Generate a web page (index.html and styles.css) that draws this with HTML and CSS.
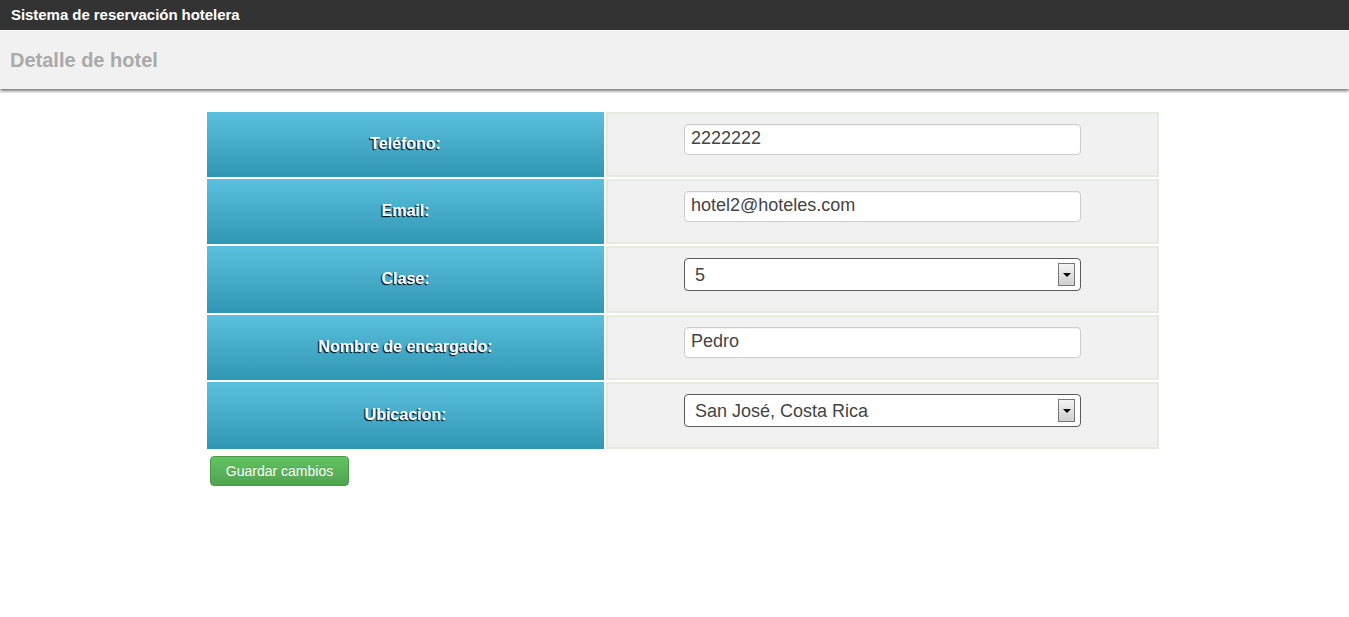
FILE: index.html
```html
<!DOCTYPE html>
<html lang="es">
<head>
<meta charset="utf-8">
<title>Detalle de hotel</title>
<link rel="stylesheet" href="styles.css">
</head>
<body>
<div class="topbar">Sistema de reservación hotelera</div>
<div class="pagehead"><h1 class="pagetitle">Detalle de hotel</h1></div>
<form class="content">
  <table class="detail">
    <tr>
      <td class="label">Teléfono:</td>
      <td class="field"><input class="text-input" type="text" value="2222222"></td>
    </tr>
    <tr>
      <td class="label">Email:</td>
      <td class="field"><input class="text-input" type="text" value="hotel2@hoteles.com"></td>
    </tr>
    <tr>
      <td class="label">Clase:</td>
      <td class="field">
        <div class="select-wrap">
          <select class="select-input"><option>5</option></select>
          <span class="select-arrow"></span>
        </div>
      </td>
    </tr>
    <tr>
      <td class="label">Nombre de encargado:</td>
      <td class="field"><input class="text-input" type="text" value="Pedro"></td>
    </tr>
    <tr>
      <td class="label">Ubicacion:</td>
      <td class="field">
        <div class="select-wrap">
          <select class="select-input"><option>San José, Costa Rica</option></select>
          <span class="select-arrow"></span>
        </div>
      </td>
    </tr>
  </table>
  <button class="btn-save" type="button">Guardar cambios</button>
</form>
</body>
</html>
```
FILE: styles.css
```css
html, body {
  margin: 0;
  padding: 0;
  background: #fff;
  font-family: "Liberation Sans", Arial, sans-serif;
}

.topbar {
  height: 30px;
  line-height: 30px;
  background: #333;
  color: #fff;
  font-weight: bold;
  font-size: 15px;
  letter-spacing: -0.05px;
  padding-left: 11px;
  border-bottom: 1px solid #fff;
}

.pagehead {
  height: 58px;
  background: #f1f1f1;
  box-shadow: 0 2px 3px rgba(0, 0, 0, 0.55);
  position: relative;
}

.pagetitle {
  margin: 0;
  padding-left: 10px;
  font-size: 20px;
  line-height: 58px;
  font-weight: bold;
  color: #aaa;
}

.content {
  padding: 21px 0 0 205px;
}

.detail {
  border-collapse: separate;
  border-spacing: 2px;
  width: 956px;
}

.label {
  width: 397px;
  padding: 0 0 2px;
  background: linear-gradient(to bottom, #5bc0de, #2f96b4);
  color: #fff;
  font-weight: bold;
  font-size: 16px;
  text-align: center;
  vertical-align: middle;
  text-shadow: -1px 1px 1px #000;
}

.field {
  background: #f1f1f1;
  border: 2px solid #e5ecde;
  padding: 10px 0;
  vertical-align: top;
}

.text-input {
  display: block;
  box-sizing: border-box;
  width: 397px;
  height: 31px;
  margin: 0 auto 10px;
  padding: 2px 6px 4px;
  border: 1px solid #ccc;
  border-radius: 4px;
  box-shadow: inset 0 1px 1px rgba(0, 0, 0, 0.05);
  background: #fff;
  font-family: "Liberation Sans", Arial, sans-serif;
  font-size: 18px;
  color: #444;
}

.select-wrap {
  position: relative;
  width: 397px;
  height: 33px;
  margin: 0 auto 10px;
}

.select-input {
  -webkit-appearance: none;
  appearance: none;
  display: block;
  box-sizing: border-box;
  width: 100%;
  height: 33px;
  padding: 0 0 0 10px;
  border: 1px solid #5a5a5a;
  border-radius: 4px;
  background: #fff;
  font-family: "Liberation Sans", Arial, sans-serif;
  font-size: 18px;
  color: #444;
}

.select-arrow {
  position: absolute;
  right: 6px;
  top: 5px;
  width: 15px;
  height: 21px;
  border: 1px solid #777;
  background: linear-gradient(to bottom, #f4f4f4, #cfcfcf);
  pointer-events: none;
}

.select-arrow::after {
  content: "";
  position: absolute;
  left: 4px;
  top: 9px;
  border-left: 4px solid transparent;
  border-right: 4px solid transparent;
  border-top: 4px solid #000;
}

.btn-save {
  display: block;
  margin: 5px 0 0 5px;
  width: 139px;
  height: 30px;
  padding: 0;
  border: 1px solid #4a9a4a;
  border-radius: 4px;
  background: linear-gradient(to bottom, #62c462, #51a351);
  color: #fff;
  font-family: "Liberation Sans", Arial, sans-serif;
  font-size: 14px;
  text-shadow: 0 -1px 0 rgba(0, 0, 0, 0.15);
  box-shadow: 0 1px 2px rgba(0, 0, 0, 0.1);
}
```
